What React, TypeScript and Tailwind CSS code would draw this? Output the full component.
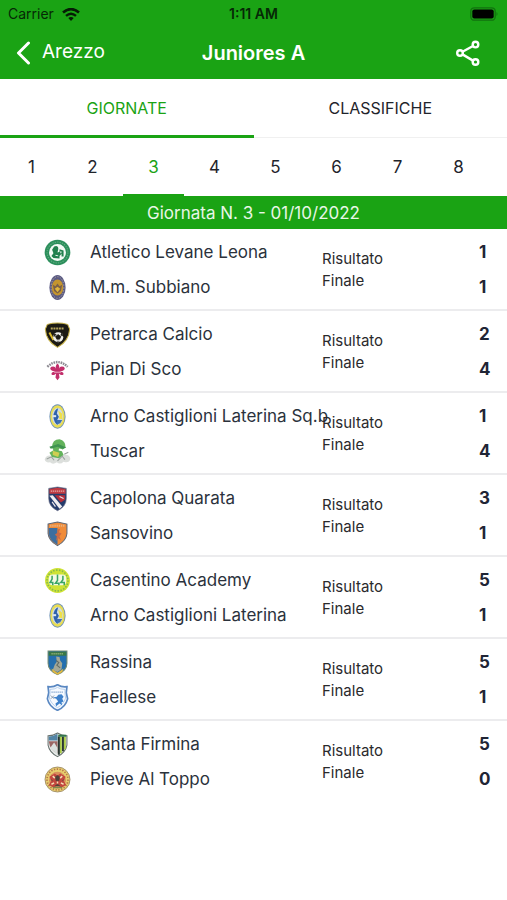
import type { ReactNode } from "react";

type Team = { name: string; goals: number; crest: ReactNode };

function Crest({ children }: { children: ReactNode }) {
  return (
    <svg viewBox="0 0 40 40" className="size-[27px] shrink-0" aria-hidden="true">
      {children}
    </svg>
  );
}

const levane = (
  <Crest>
    <circle cx="20" cy="20" r="19" fill="#2c8f5c" />
    <circle cx="20" cy="20" r="15.5" fill="none" stroke="#5fae82" strokeWidth="1.5" strokeDasharray="2 1.6" />
    <circle cx="20" cy="20" r="12.5" fill="#f3faf5" />
    <path d="M15 11c4-2 7 0 6 5l-1 4 3-1v-4l6 2v9h-3v-4l-3 3v4l-9-1-3-3 3-4-2-5z" fill="#21804e" />
    <path d="M17 24l4 1M25 18v3" stroke="#f3faf5" strokeWidth="1.5" />
  </Crest>
);

const subbiano = (
  <Crest>
    <ellipse cx="20" cy="20" rx="12" ry="18.5" fill="#5b5b84" />
    <ellipse cx="20" cy="20" rx="9.5" ry="16" fill="none" stroke="#a9a3a0" strokeWidth="1.4" strokeDasharray="2 2" />
    <ellipse cx="20" cy="20" rx="8.5" ry="12" fill="#c4952f" />
    <path d="M13 16l4 2 3-4 3 4 4-2-2 9-5 4-5-4z" fill="#7a6048" />
    <path d="M16 22l4-3 4 3-4 5z" fill="#e0b53c" />
  </Crest>
);

const petrarca = (
  <Crest>
    <path d="M5 5q15-4 30 0l3 7q-1 18-18 27Q3 30 2 12z" fill="#1b1a14" stroke="#c3ae45" strokeWidth="1.5" />
    <path d="M10 11h20" stroke="#b3a45c" strokeWidth="3" strokeDasharray="3 1" />
    <path d="M8 17l6 11" stroke="#d9b92f" strokeWidth="3" />
    <circle cx="21" cy="24" r="7.5" fill="#f0f0ec" />
    <path d="M21 20l4 3-2 4h-4l-2-4zM15 19l3 1-3 3zM26 18l2 4-3-1zM19 30h4" fill="#1b1a14" stroke="#1b1a14" />
  </Crest>
);

const pianDiSco = (
  <Crest>
    <path d="M5 16Q20 2 35 16" fill="none" stroke="#8d8a92" strokeWidth="3.6" strokeDasharray="2.4 1.2" />
    <path d="M20 11q4 4 2 8 2-5 7-3 4 3-1 6l-5 1q6 0 6 4-3 3-7-1l1 6-3 4-3-4 1-6q-4 4-7 1 0-4 6-4l-5-1q-5-3-1-6 5-2 7 3-2-4 2-8z" fill="#c22e6b" />
    <path d="M15 24h10" stroke="#f5c7d9" strokeWidth="1.2" />
  </Crest>
);

const laterina = (
  <Crest>
    <ellipse cx="20" cy="20" rx="12" ry="18" fill="#6f92b8" />
    <ellipse cx="20" cy="20" rx="10.6" ry="16.6" fill="#e9dd54" />
    <ellipse cx="20" cy="20" rx="8" ry="12.5" fill="#cfdbe4" />
    <path d="M21 7.600A8 12.500 0 0 0 21 32.400l-2-6 3-6-3-5z" fill="#2f62ad" />
    <path d="M21 11l6 5v8l-5-1 1-4z" fill="#efe04a" />
    <path d="M13 18h5v3h-5z" fill="#dce6ef" />
    <path d="M19 25h8l-3 5-5 2z" fill="#3f70b0" />
  </Crest>
);

const tuscar = (
  <Crest>
    <path d="M1 32q2-7 9-6l20-1q8-1 9 6-2 7-10 4-5 5-10 1-6 4-10 0-7 1-8-4z" fill="#dcdfdc" />
    <path d="M12 14q0-12 11-12 9 2 9 12l-6 4 3 7-7 5-10-2-4-6 6-4z" fill="#63b35c" />
    <path d="M8 13l13-4 12 5-5 2-8-3-10 3z" fill="#3f9350" />
    <path d="M13 19l10 3-2 6-8-3z" fill="#cfce52" />
    <path d="M22 17l5 1" stroke="#fff" strokeWidth="3" />
    <path d="M4 31l7-3 4 5M20 34l7-7 4 5M30 24l6-3" stroke="#98a19c" strokeWidth="1.5" fill="none" />
  </Crest>
);

const capolona = (
  <Crest>
    <path d="M7 5l13-2 13 2v15q0 12-13 18Q7 32 7 20z" fill="#243b6c" stroke="#696c83" />
    <path d="M8 6l12-2 12 2v7H8z" fill="#c03b42" />
    <path d="M10 9h20" stroke="#dfa8a8" strokeWidth="2" strokeDasharray="2 1" />
    <path d="M8 16l5-1 14 17-4 3z" fill="#f0edf0" />
    <path d="M16 15h15v7l-6 4z" fill="#b72f3a" />
    <path d="M23 17l6 3M12 25l5 7" stroke="#e8e3e8" strokeWidth="1.8" />
  </Crest>
);

const sansovino = (
  <Crest>
    <path d="M6 6l14-3 14 3v14q-1 11-14 18Q7 31 6 20z" fill="#f08c3a" stroke="#596678" strokeWidth="1.5" />
    <path d="M20 12H7v8q1 10 13 17z" fill="#3d6e9f" />
    <path d="M9 8.500h22" stroke="#e8b17f" strokeWidth="3" strokeDasharray="2 1.2" />
    <path d="M20 14l4-1-2 5 4 2-3 4 2 6-4-3-3 4 1-7-3-2 4-3z" fill="#cc6a45" />
  </Crest>
);

const casentino = (
  <Crest>
    <circle cx="20" cy="20" r="18.5" fill="#cfe335" />
    <circle cx="20" cy="20" r="15.500" fill="none" stroke="#86b94e" strokeWidth="2.500" strokeDasharray="2.2 2.2" />
    <rect x="7" y="11" width="26" height="16" rx="6" fill="#f4fae4" />
    <path d="M12 13v5l-3 5h4v4M20 11v9l-3 4h5v3M28 13v6l-3 4h5v4" fill="none" stroke="#3aa566" strokeWidth="2.3" />
  </Crest>
);

const rassina = (
  <Crest>
    <path d="M6 3h28v18q0 11-14 17Q6 32 6 21z" fill="#246fae" stroke="#74896f" strokeWidth="1.5" />
    <path d="M7 4h26v6H7z" fill="#397747" />
    <path d="M11 7h18" stroke="#8fae76" strokeWidth="2" strokeDasharray="2 1" />
    <path d="M18 11l5 1 1 5 3 4-1 9-6 4-7-3 3-8 3-4z" fill="#a3a897" />
    <path d="M18 17l4 3-3 4 5 4" stroke="#626c65" strokeWidth="1.6" fill="none" />
    <path d="M11 29l9 6 9-6-2 5-7 4-7-4z" fill="#e2b83f" />
  </Crest>
);

const faellese = (
  <Crest>
    <path d="M6 4q8 1 14-3 6 4 14 3l-1 9 2 9q-3 12-15 17Q8 34 5 22l2-9z" fill="#f6faff" stroke="#5a88c2" strokeWidth="2.500" />
    <path d="M9 8q7 0 11-3 4 3 11 3v6l1 7q-3 9-12 14-9-5-12-14l1-7z" fill="none" stroke="#9dbde2" />
    <path d="M11 12h18" stroke="#87a9d1" strokeWidth="2" strokeDasharray="2 1" />
    <path d="M26 15l3 4-2 3 2 4-3 1 1 5-4-3-5 4-1-4 4-3-3-4-5-2 6-1 2-3z" fill="#3f82cc" />
    <path d="M10 17l5 5M15 17l-5 5" stroke="#7a899b" strokeWidth="1.2" />
  </Crest>
);

const firmina = (
  <Crest>
    <path d="M6 7q8 0 14-4 6 4 14 4v14q-2 11-14 17Q8 32 6 21z" fill="#e9edec" stroke="#66706d" strokeWidth="1.5" />
    <path d="M7 8q7 0 13-4v10H7z" fill="#5284a5" />
    <path d="M7 15h13v18Q9 29 7 15z" fill="#9b6664" />
    <path d="M9 25l6-8 5 8v10z" fill="#dae0de" />
    <path d="M22 8v27M28 8v22" stroke="#29372f" strokeWidth="3" />
    <path d="M25 8v25M31 9v18" stroke="#a6c93d" strokeWidth="2.5" />
    <path d="M21 7h12" stroke="#32764a" strokeWidth="3" />
  </Crest>
);

const toppo = (
  <Crest>
    <circle cx="20" cy="20" r="18.500" fill="#e6cf6e" stroke="#94805c" strokeWidth="1.2" />
    <circle cx="20" cy="20" r="15.500" fill="none" stroke="#b9764c" strokeWidth="2.500" strokeDasharray="2 2.200" />
    <circle cx="20" cy="21" r="12.500" fill="#d98e5c" />
    <path d="M8 16l8-5 4 3 4-3 8 5-3 6 4 6-7 4-6-4-6 4-7-4 4-6z" fill="#c2463e" />
    <path d="M17 16l3-2 3 2-1 6h-4zM10 20l3 2M30 20l-3 2M16 30l4-3 4 3" fill="#4c4038" stroke="#4c4038" />
    <path d="M11 27l4-2M29 27l-4-2M13 15l3 3M27 15l-3 3M20 23v3" stroke="#f3dfb4" strokeWidth="2.200" />
    <path d="M13 32h14" stroke="#7c8a4c" strokeWidth="2" />
  </Crest>
);

const matches: [Team, Team][] = [
  [
    { name: "Atletico Levane Leona", goals: 1, crest: levane },
    { name: "M.m. Subbiano", goals: 1, crest: subbiano },
  ],
  [
    { name: "Petrarca Calcio", goals: 2, crest: petrarca },
    { name: "Pian Di Sco", goals: 4, crest: pianDiSco },
  ],
  [
    { name: "Arno Castiglioni Laterina Sq.b", goals: 1, crest: laterina },
    { name: "Tuscar", goals: 4, crest: tuscar },
  ],
  [
    { name: "Capolona Quarata", goals: 3, crest: capolona },
    { name: "Sansovino", goals: 1, crest: sansovino },
  ],
  [
    { name: "Casentino Academy", goals: 5, crest: casentino },
    { name: "Arno Castiglioni Laterina", goals: 1, crest: laterina },
  ],
  [
    { name: "Rassina", goals: 5, crest: rassina },
    { name: "Faellese", goals: 1, crest: faellese },
  ],
  [
    { name: "Santa Firmina", goals: 5, crest: firmina },
    { name: "Pieve Al Toppo", goals: 0, crest: toppo },
  ],
];

const days = [1, 2, 3, 4, 5, 6, 7, 8];

function StatusBar() {
  return (
    <div className="grid h-7 grid-cols-3 items-center px-2 text-sm text-[#062806]">
      <div className="flex items-center gap-2">
        <span>Carrier</span>
        <svg viewBox="0 0 18 13" className="h-[13px] w-[18px]" aria-hidden="true">
          <path d="M1 4.600Q9-2.400 17 4.600" fill="none" stroke="#051c05" strokeWidth="2.600" />
          <path d="M4 7.900Q9 3.500 14 7.900" fill="none" stroke="#051c05" strokeWidth="2.400" />
          <path d="M6.300 10Q9 7.800 11.700 10L9 13z" fill="#051c05" />
        </svg>
      </div>
      <span className="text-center font-semibold">1:11 AM</span>
      <svg viewBox="0 0 30 14" className="h-3.5 w-[30px] justify-self-end" aria-hidden="true">
        <rect x="1.800" y="0.800" width="24.400" height="12.400" rx="3.500" fill="none" stroke="#12720f" strokeWidth="1.300" />
        <rect x="3.300" y="2.500" width="21.400" height="9" rx="2" fill="#000" />
        <path d="M27.500 5q2 2 0 4z" fill="#12720f" />
      </svg>
    </div>
  );
}

export default function App() {
  return (
    <div className="min-h-screen bg-white font-['Inter','Liberation_Sans',sans-serif] text-[#1f242b]">
      <header className="bg-[#1aa314]">
        <StatusBar />
        <div className="grid h-[51px] grid-cols-[1fr_auto_1fr] items-center px-4 pb-0.5 text-white">
          <button className="flex items-center gap-2.5 justify-self-start text-[19px]">
            <svg viewBox="0 0 16 24" className="h-6 w-4" fill="none" stroke="currentColor" strokeWidth="3" strokeLinecap="round" strokeLinejoin="round" aria-hidden="true">
              <path d="M12.500 2L2.500 12l10 10" />
            </svg>
            Arezzo
          </button>
          <h1 className="text-xl font-semibold">Juniores A</h1>
          <button className="mr-2.5 justify-self-end" aria-label="Condividi">
            <svg viewBox="0 0 26 26" className="size-[26px]" fill="none" stroke="currentColor" strokeWidth="2.400" aria-hidden="true">
              <circle cx="5" cy="13" r="2.800" />
              <circle cx="20.500" cy="4.600" r="2.800" />
              <circle cx="20.500" cy="22" r="2.800" />
              <path d="M7.500 11.700l10.500-5.700M7.500 14.400l10.500 6.200" />
            </svg>
          </button>
        </div>
      </header>
      <nav className="grid h-[59px] grid-cols-2 text-base" aria-label="Sezioni">
        <button className="border-b-3 border-[#1aa314] pt-0.5 text-[#1aa314]">GIORNATE</button>
        <button className="border-b border-[#f0f0f0]">CLASSIFICHE</button>
      </nav>
      <nav className="flex h-[58px] overflow-hidden pl-px text-[17px]" aria-label="Giornate">
        {days.map((day) => (
          <button
            key={day}
            className={
              day === 3
                ? "w-[61px] shrink-0 border-b-2 border-[#1aa314] pt-1 text-[#1aa314]"
                : "w-[61px] shrink-0 border-b-2 border-transparent pt-1"
            }
          >
            {day}
          </button>
        ))}
      </nav>
      <h2 className="bg-[#1aa314] pt-1 pb-[3px] text-center text-[17px] leading-[26px] text-[#e8f6e7]">
        Giornata N. 3 - 01/10/2022
      </h2>
      <ul>
        {matches.map(([home, away]) => (
          <li
            key={home.name}
            className="grid h-[82px] grid-cols-[minmax(0,1fr)_157px_28px] items-center border-b-2 border-[#ececee] pt-0.5 last:border-transparent"
          >
            <div className="pl-11 text-[17px] text-[#2b323c]">
              {[home, away].map((team) => (
                <div key={team.name} className="flex h-[35px] items-center gap-[19px]">
                  {team.crest}
                  <span className="whitespace-nowrap">{team.name}</span>
                </div>
              ))}
            </div>
            <p className="w-20 text-[15px] leading-[22px] text-[#2a2a2c]">Risultato Finale</p>
            <div className="text-[17px] font-bold text-[#1f2535]">
              {[home, away].map((team) => (
                <div key={team.name} className="flex h-[35px] items-center">
                  {team.goals}
                </div>
              ))}
            </div>
          </li>
        ))}
      </ul>
    </div>
  );
}
